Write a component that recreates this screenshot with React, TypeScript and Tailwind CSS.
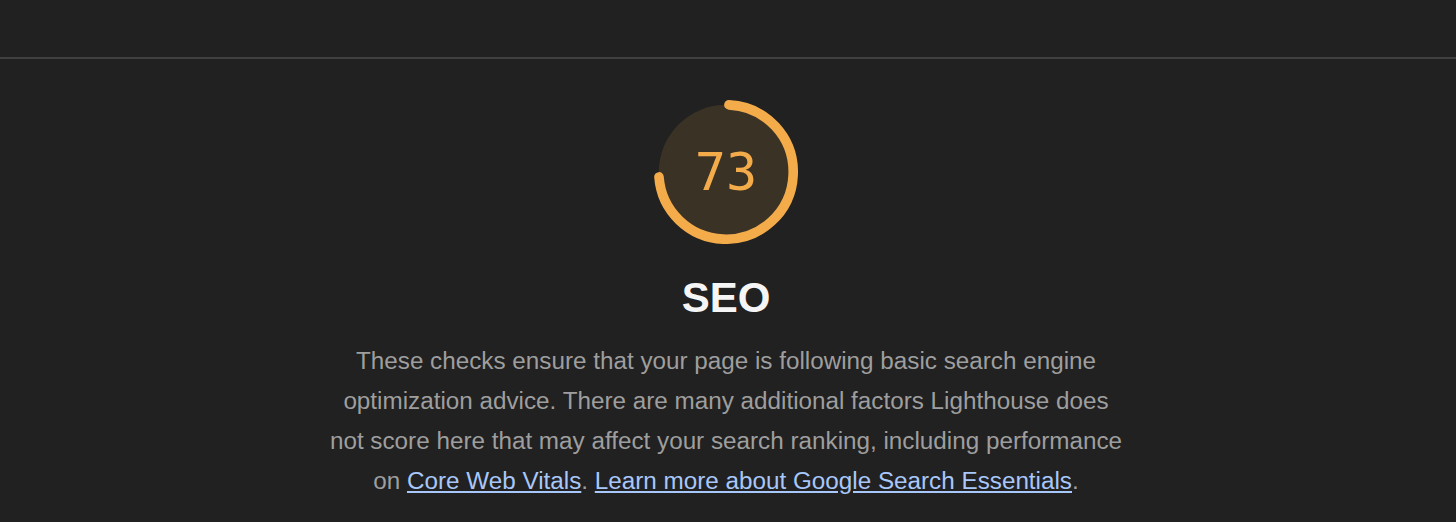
import React from 'react'

const SCORE = 73

const Gauge: React.FC<{ score: number }> = ({ score }) => {
  const r = 56
  const circumference = 2 * Math.PI * r
  const arc = (score / 100) * circumference

  return (
    <div className="relative h-[144px] w-[144px]">
      <svg viewBox="0 0 120 120" className="h-full w-full">
        <circle cx="60" cy="60" r="56" fill="#f4ac4b" fillOpacity="0.12" stroke="none" />
        <circle
          cx="60"
          cy="60"
          r={r}
          fill="none"
          stroke="#f4ac4b"
          strokeWidth="8"
          strokeLinecap="round"
          strokeDasharray={`${arc} ${circumference}`}
          transform="rotate(-87.5 60 60)"
        />
      </svg>
      <div className="absolute inset-0 flex items-center justify-center">
        <span className="font-['DejaVu_Sans_Mono',monospace] text-[52px] leading-none text-[#f4ac4b]">
          {score}
        </span>
      </div>
    </div>
  )
}

const App: React.FC = () => {
  return (
    <div className="min-h-[522px] w-full bg-[#212121] font-['Liberation_Sans',Arial,sans-serif]">
      <div className="h-[57px]" />
      <div className="h-[2px] bg-[#404040]" />

      {/* content column sits slightly left of the window centre */}
      <section className="flex flex-col items-center pr-[4px] pt-[41px]">
        <Gauge score={SCORE} />

        <h2 className="mt-[29px] text-[42px] font-bold leading-[50px] text-[#f5f5f5]">SEO</h2>

        <p className="mt-[18px] max-w-[798px] text-center text-[24.25px] leading-[40px] text-[#9e9e9e]">
          These checks ensure that your page is following basic search engine optimization advice.
          There are many additional factors Lighthouse does not score here that may affect your
          search ranking, including performance on{' '}
          <a href="#" className="text-[#a8c7fa] underline">
            Core Web Vitals
          </a>
          .{' '}
          <a href="#" className="text-[#a8c7fa] underline">
            Learn more about Google Search Essentials
          </a>
          .
        </p>
      </section>
    </div>
  )
}

export default App
